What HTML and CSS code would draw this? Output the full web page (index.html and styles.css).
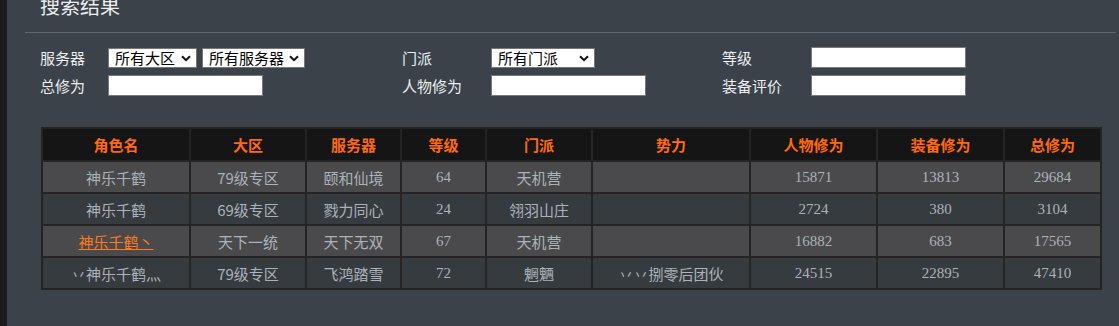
FILE: index.html
```html
<!DOCTYPE html>
<html lang="zh-CN">
<head>
<meta charset="utf-8">
<title>搜索结果</title>
<link rel="stylesheet" href="styles.css">
</head>
<body>
<div class="page">
  <h2 class="title">搜索结果</h2>
  <div class="rule"></div>
  <form class="filters">
    <label class="lbl">服务器</label>
    <div class="ctl">
      <span class="selwrap">
        <select class="sel sel-zone"><option>所有大区</option></select>
        <svg class="chev" width="10" height="7" viewBox="0 0 10 7"><path d="M1 1.2 L5 5.2 L9 1.2" fill="none" stroke="#111" stroke-width="2"/></svg>
      </span>
      <span class="selwrap">
        <select class="sel sel-server"><option>所有服务器</option></select>
        <svg class="chev" width="10" height="7" viewBox="0 0 10 7"><path d="M1 1.2 L5 5.2 L9 1.2" fill="none" stroke="#111" stroke-width="2"/></svg>
      </span>
    </div>
    <label class="lbl">门派</label>
    <div class="ctl">
      <span class="selwrap">
        <select class="sel sel-school"><option>所有门派</option></select>
        <svg class="chev" width="10" height="7" viewBox="0 0 10 7"><path d="M1 1.2 L5 5.2 L9 1.2" fill="none" stroke="#111" stroke-width="2"/></svg>
      </span>
    </div>
    <label class="lbl">等级</label>
    <div class="ctl"><input class="txt" type="text"></div>

    <label class="lbl">总修为</label>
    <div class="ctl"><input class="txt" type="text"></div>
    <label class="lbl">人物修为</label>
    <div class="ctl"><input class="txt" type="text"></div>
    <label class="lbl">装备评价</label>
    <div class="ctl"><input class="txt" type="text"></div>
  </form>

  <table class="results">
    <colgroup>
      <col class="c1"><col class="c2"><col class="c3"><col class="c4"><col class="c5">
      <col class="c6"><col class="c7"><col class="c8"><col class="c9">
    </colgroup>
    <thead>
      <tr>
        <th>角色名</th><th>大区</th><th>服务器</th><th>等级</th><th>门派</th>
        <th>势力</th><th>人物修为</th><th>装备修为</th><th>总修为</th>
      </tr>
    </thead>
    <tbody>
      <tr class="odd">
        <td>神乐千鹤</td><td>79级专区</td><td>颐和仙境</td><td class="num">64</td><td>天机营</td>
        <td></td><td class="num">15871</td><td class="num">13813</td><td class="num">29684</td>
      </tr>
      <tr class="even">
        <td>神乐千鹤</td><td>69级专区</td><td>戮力同心</td><td class="num">24</td><td>翎羽山庄</td>
        <td></td><td class="num">2724</td><td class="num">380</td><td class="num">3104</td>
      </tr>
      <tr class="odd">
        <td><a class="link" href="#">神乐千鹤丶</a></td><td>天下一统</td><td>天下无双</td><td class="num">67</td><td>天机营</td>
        <td></td><td class="num">16882</td><td class="num">683</td><td class="num">17565</td>
      </tr>
      <tr class="even">
        <td>丷神乐千鹤灬</td><td>79级专区</td><td>飞鸿踏雪</td><td class="num">72</td><td>魍魉</td>
        <td>丷丷捌零后团伙</td><td class="num">24515</td><td class="num">22895</td><td class="num">47410</td>
      </tr>
    </tbody>
  </table>
</div>
</body>
</html>
```
FILE: styles.css
```css
html, body {
  margin: 0;
  padding: 0;
  background: #1c1c1c;
  overflow: hidden;
}

.page {
  margin-left: 7px;
  height: 326px;
  background: #3b4249;
  font-family: "Noto Sans CJK SC", "Noto Sans", sans-serif;
  color: #e6e8ea;
  overflow: hidden;
}

.title {
  margin: -4px 0 0 33px;
  font-size: 20px;
  line-height: 20px;
  font-weight: normal;
  color: #eceeef;
}

.rule {
  margin: 16px 3px 0 18px;
  height: 1px;
  background: #5f6871;
}

.filters {
  margin: 14px 0 0 33px;
  display: grid;
  grid-template-columns: 68px 294px 89px 231px 89px 155px;
  grid-template-rows: 21px 21px;
  row-gap: 7px;
  align-items: center;
}

.lbl {
  font-size: 15px;
  line-height: 21px;
  color: #eceef0;
}

.ctl {
  display: flex;
  align-items: center;
  gap: 5px;
}

.selwrap {
  position: relative;
  display: inline-flex;
}

.sel {
  -webkit-appearance: none;
  appearance: none;
  box-sizing: border-box;
  height: 20px;
  font-family: "Noto Sans CJK SC", sans-serif;
  font-size: 15px;
  line-height: 18px;
  color: #000;
  background: #fff;
  border: 1px solid #767676;
  border-radius: 0;
  padding: 0 0 0 6px;
  margin: 0;
}

.chev {
  position: absolute;
  right: 6px;
  top: 7px;
  pointer-events: none;
}

.sel-zone { width: 89px; }
.sel-server { width: 103px; }
.sel-school { width: 104px; }

.txt {
  box-sizing: border-box;
  width: 155px;
  height: 21px;
  margin: 0;
  padding: 0 2px;
  border: 1px solid #7a7a7a;
  background: #fff;
  border-radius: 0;
}

.results {
  margin: 31px 0 0 34px;
  width: 1059px;
  table-layout: fixed;
  border-collapse: collapse;
  border: 2px solid #202020;
  font-size: 14px;
}

.c1 { width: 148px; }
.c2 { width: 116px; }
.c3 { width: 95px; }
.c4 { width: 85px; }
.c5 { width: 106px; }
.c6 { width: 158px; }
.c7 { width: 127px; }
.c8 { width: 127px; }
.c9 { width: 97px; }

.results th,
.results td {
  border: 2px solid #242424;
  padding: 0;
  text-align: center;
  vertical-align: middle;
  white-space: nowrap;
  overflow: hidden;
}

.results th {
  height: 31px;
  background: #151515;
  color: #ff6a0d;
  font-weight: bold;
  font-size: 15px;
}

.results td {
  height: 30px;
  color: #abb2ba;
  font-size: 15px;
}

.results tr.odd td { background: #4a4a4c; }
.results tr.even td { background: #363b40; }

.results td.num {
  font-family: "Liberation Serif", "Noto Sans CJK SC", serif;
  font-size: 15px;
}

.link {
  color: #ff7a1c;
  text-decoration: underline;
}
```
